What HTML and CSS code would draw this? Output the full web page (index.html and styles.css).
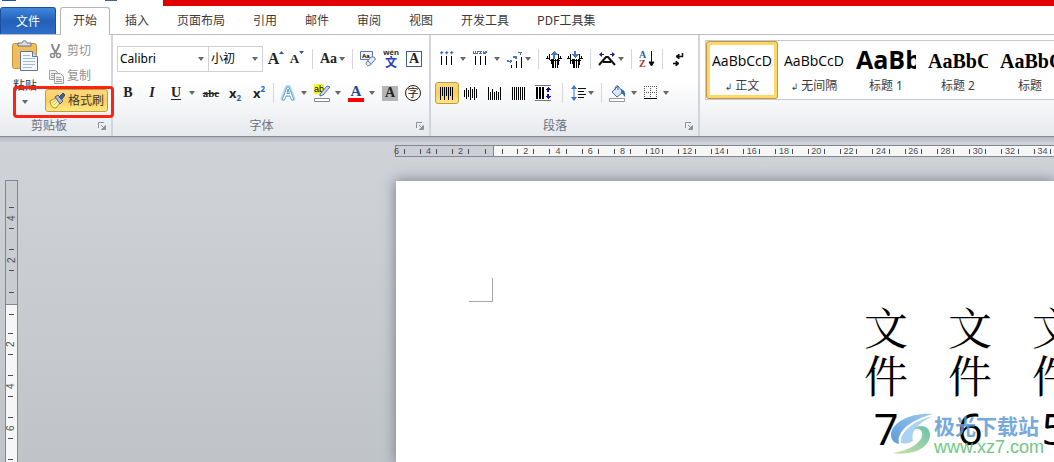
FILE: index.html
```
<!DOCTYPE html>
<html lang="zh-CN">
<head>
<meta charset="utf-8">
<title>文档编辑</title>
<link rel="stylesheet" href="styles.css">
</head>
<body>
<header class="titlebar">
  <span class="quick"></span><span class="quick quick-small"></span><span class="title-fill"></span>
</header>

<nav class="tabs">
  <button class="tab tab-file">文件</button>
  <button class="tab tab-active">开始</button>
  <button class="tab">插入</button>
  <button class="tab">页面布局</button>
  <button class="tab">引用</button>
  <button class="tab">邮件</button>
  <button class="tab">审阅</button>
  <button class="tab">视图</button>
  <button class="tab">开发工具</button>
  <button class="tab">PDF工具集</button>
</nav>

<section class="ribbon">
  <div class="group group-clipboard">
    <div class="clipboard">
      <button class="paste">
        <svg width="28" height="32" viewBox="0 0 28 32">
          <rect x="1.500" y="3.500" width="24" height="25" rx="2" fill="#f2bd5e" stroke="#c8923a"/>
          <path d="M7 6V3h4c0-3 5-3 5 0h4v3z" fill="#d9dde2" stroke="#6d7278"/>
          <path d="M9.500 11.500h12l5 5v14h-17z" fill="#f4f8fd" stroke="#5f7591"/>
          <path d="M21.500 11.500v5h5" fill="#cfdcec" stroke="#5f7591"/>
          <path d="M12 15.500h7M12 18.500h12M12 21.500h12M12 24.500h12M12 27.500h9" stroke="#a4b9d3"/>
        </svg>
        <span>粘贴</span>
        <i class="arrow"></i>
      </button>
      <div class="clip-actions">
        <button class="action muted">
          <svg width="16" height="16" viewBox="0 0 16 16" fill="none" stroke="#8b8b8b"><path d="M4 1c0 3 1 5 5 10M11 1c0 3-1 5-5 10" stroke-width="2"/><circle cx="4.500" cy="12.500" r="2" stroke-width="1.500"/><circle cx="10.500" cy="12.500" r="2" stroke-width="1.500"/></svg>
          剪切</button>
        <button class="action muted">
          <svg width="16" height="16" viewBox="0 0 16 16" fill="#f1f1f1" stroke="#a0a0a0"><path d="M1.500 2.500h6l2 2v7h-8z"/><path d="M3 5.500h4M3 7.500h4M3 9.500h3"/><path d="M6.500 5.500h6l3 3v7h-9z"/><path d="M8 9.500h5M8 11.500h6M8 13.500h6"/></svg>
          复制</button>
        <button class="action painter">
          <svg width="16" height="16" viewBox="0 0 16 16"><path d="M1 8l6-3 4 5-4 5c-3 0-5-1-6-7z" fill="#fff3a2" stroke="#a48a3d"/><path d="M3 10l4-3M5 12l3-3" stroke="#d5b648"/><path d="M6 4l3-2 5 6-3 3z" fill="#a9b9d0" stroke="#4a5f80"/><path d="M10 4l4-4 2 2-3 4z" fill="#44618e" stroke="#344a70"/></svg>
          格式刷</button>
      </div>
    </div>
    <footer class="group-name"><span>剪贴板</span><svg class="launcher" viewBox="0 0 8 8"><path d="M.5 6V.5H6" fill="none" stroke="#8d929a"/><path d="M3 3l3 3M7.500 3.500v4h-4z" fill="#8d929a" stroke="#8d929a"/></svg></footer>
    <div class="highlight"></div>
  </div>

  <div class="group group-font">
    <div class="row">
      <label class="combo combo-font"><input aria-label="字体" value="Calibri"><i class="arrow"></i></label>
      <label class="combo combo-size"><input aria-label="字号" value="小初"><i class="arrow"></i></label>
      <div class="set set-tight">
        <button class="tool glyph serif grow">A<svg class="mark" viewBox="0 0 5 3"><path d="M0 3l2.500-3L5 3z" fill="#2d58a8"/></svg></button>
        <button class="tool glyph serif shrink">A<svg class="mark" viewBox="0 0 5 3"><path d="M0 0h5L2.500 3z" fill="#2d58a8"/></svg></button>
      </div>
      <i class="sep"></i>
      <button class="tool split near glyph serif case">Aa<i class="arrow"></i></button>
      <i class="sep"></i>
      <div class="set">
        <button class="tool" aria-label="清除格式"><svg width="16" height="16" viewBox="0 0 16 16"><path d="M.5.5h12v8H.5z" fill="#eef3fa" stroke="#5878a8"/><text x="2" y="7" class="tiny-a">Aa</text><path d="M6 12l5-6q4-1 4.500 2l-5 6q-4 2-4.500-2z" fill="#e3eaf6" stroke="#637ca4"/><path d="M7 10q2 0 4 3" stroke="#637ca4" fill="none"/></svg></button>
        <button class="tool pinyin"><small>wén</small><b>文</b></button>
        <button class="tool glyph serif framed">A</button>
      </div>
    </div>
    <div class="row row-format">
      <div class="set set-wide">
        <button class="tool glyph serif">B</button>
        <button class="tool glyph serif italic">I</button>
        <button class="tool split glyph serif"><u>U</u><i class="arrow"></i></button>
        <button class="tool glyph serif strike">abc</button>
        <button class="tool glyph script">x<sub>2</sub></button>
        <button class="tool glyph script">x<sup>2</sup></button>
      </div>
      <i class="sep"></i>
      <div class="set">
        <button class="tool split" aria-label="文本效果"><svg width="16" height="18" viewBox="0 0 16 18" fill="none"><path d="M2 16L7 3h2l5 13M4.500 11h7" stroke="#b5def5" stroke-width="4" stroke-linejoin="round"/><path d="M2 16L7 3h2l5 13h-2.500l-1.500-4H6l-1.500 4zM7 9.500h2.500L8 5z" fill="#fff" stroke="#5b9fce"/></svg><i class="arrow"></i></button>
        <button class="tool split" aria-label="突出显示"><svg width="16" height="18" viewBox="0 0 16 18"><path d="M0 0h10v10H0z" fill="#f8f22c"/><text x="0" y="8" class="tiny-ab">ab</text><path d="M6 10l7-8 3 1-7 8-3 1z" fill="#c7d8ec" stroke="#56749f"/><path d="M.5 14.500h15v3H.5z" fill="#fff" stroke="#888"/></svg><i class="arrow"></i></button>
        <button class="tool split" aria-label="字体颜色"><svg width="16" height="18" viewBox="0 0 16 18"><text x="8" y="12" text-anchor="middle" class="color-a">A</text><path d="M0 14h16v4H0z" fill="#f00"/></svg><i class="arrow"></i></button>
        <button class="tool glyph serif shaded">A</button>
        <button class="tool circled">字</button>
      </div>
    </div>
    <footer class="group-name"><span>字体</span><svg class="launcher" viewBox="0 0 8 8"><path d="M.5 6V.5H6" fill="none" stroke="#8d929a"/><path d="M3 3l3 3M7.500 3.500v4h-4z" fill="#8d929a" stroke="#8d929a"/></svg></footer>
  </div>

  <div class="group group-paragraph">
    <div class="row row-list">
      <div class="set">
        <button class="tool split" aria-label="项目符号"><svg class="crisp" width="16" height="16" viewBox="0 0 16 16"><path d="M1 1h1V0h1v1h1v1H3v1H2V2H1zM6 1h1V0h1v1h1v1H8v1H7V2H6zM11 1h1V0h1v1h1v1h-1v1h-1V2h-1z" fill="#3763b0" stroke="#7d9bd0" stroke-width=".5"/><path d="M2 5h1v9H2zM7 5h1v9H7zM12 5h1v9h-1z"/></svg><i class="arrow"></i></button>
        <button class="tool split" aria-label="编号"><svg class="crisp" width="16" height="16" viewBox="0 0 16 16"><path d="M0 0h1v2h1V0h1v2h1V0h1v3H0zM5 0h4v1H8v1h1v1H6V2h1V1H5zM10 0h1v1h1V0h2v2h-1v1h-3z" fill="#4b74ba"/><path d="M2 5h1v9H2zM7 5h1v9H7zM12 5h1v9h-1z"/></svg><i class="arrow"></i></button>
        <button class="tool split near" aria-label="多级列表"><svg class="crisp" width="16" height="17" viewBox="0 0 16 17"><path d="M0 9h2v1h1V9h2v2H4v1H3v-1H0zM6 5h4v3H8V7H6zM11 1h4v1h-1v2h-1V2h-2z" fill="#4b74ba"/><path d="M4 14h1v3H4zM9 10h1v7H9zM14 6h1v11h-1z"/></svg><i class="arrow"></i></button>
      </div>
      <i class="sep"></i>
      <div class="set set-tight">
        <button class="tool" aria-label="减少缩进"><svg class="crisp" width="16" height="17" viewBox="0 0 16 17"><path d="M1 5h1v3H1zM3 3h1v6H3zM5 8h1v5H5zM6 8h2v9H6zM9 8h1v9H9zM11 8h1v9h-1zM12 3h1v11h-1zM14 5h1v3h-1zM0 7h4v1H0zM12 7h4v1h-4zM4 9h10v1H4z"/><path d="M8 0l4 4H9v4H7V4H4z" fill="#4475c9"/></svg></button>
        <button class="tool" aria-label="增加缩进"><svg class="crisp" width="16" height="17" viewBox="0 0 16 17"><path d="M1 5h1v3H1zM3 3h1v10H3zM5 8h1v5H5zM6 8h2v9H6zM9 8h1v9H9zM11 8h1v9h-1zM12 3h1v11h-1zM14 5h1v3h-1zM0 7h4v1H0zM12 7h4v1h-4zM4 9h10v1H4z"/><path d="M8 7l4-4H9V0H7v3H4z" fill="#4475c9"/></svg></button>
      </div>
      <i class="sep"></i>
      <button class="tool split near" aria-label="中文版式"><svg width="18" height="14" viewBox="0 0 18 14"><path d="M1 13L8 5h2l7 8M5 10h8" fill="none" stroke="#111" stroke-width="2"/><path d="M4 0v2h2v1H4v2L1 2.500zM14 0v2h-2v1h2v2l3-2.500z" fill="#1b1c98"/></svg><i class="arrow"></i></button>
      <i class="sep"></i>
      <button class="tool" aria-label="排序"><svg width="16" height="18" viewBox="0 0 16 18"><text x="0" y="8" class="sort-a">A</text><text x="0" y="17" class="sort-z">Z</text><path d="M12.500 1v14M10 12l2.500 4 2.500-4z" stroke="#111"/></svg></button>
      <i class="sep"></i>
      <button class="tool" aria-label="显示编辑标记"><svg width="14" height="16" viewBox="0 0 14 16" fill="none" stroke="#111"><path d="M11.500 2v3.500H5M2 12.500h5" stroke-width="1.500"/><path d="M8 3L5 5.500 8 8zM5 10l3 2.500L5 15z" fill="#111"/></svg></button>
    </div>
    <div class="row row-align">
      <div class="set set-none">
        <button class="tool align selected" aria-label="顶端对齐"><svg class="crisp" width="15" height="15" viewBox="0 0 15 15"><path d="M0 1h1v13H0zM2 1h1v9H2zM4 1h1v13H4zM6 1h1v9H6zM8 1h1v13H8zM10 1h1v9h-1zM12 1h1v13h-1z"/></svg></button>
        <button class="tool align" aria-label="居中"><svg class="crisp" width="15" height="15" viewBox="0 0 15 15"><path d="M0 4h1v7H0zM2 2h1v11H2zM4 4h1v7H4zM6 1h1v13H6zM8 3h1v9H8zM10 1h1v13h-1zM12 3h1v9h-1z"/></svg></button>
        <button class="tool align" aria-label="底端对齐"><svg class="crisp" width="15" height="15" viewBox="0 0 15 15"><path d="M0 1h1v13H0zM2 6h1v8H2zM4 3h1v11H4zM6 6h1v8H6zM8 5h1v9H8zM10 6h1v8h-1zM12 1h1v13h-1z"/></svg></button>
        <button class="tool align" aria-label="两端对齐"><svg class="crisp" width="15" height="15" viewBox="0 0 15 15"><path d="M0 1h1v13H0zM2 1h1v13H2zM4 1h1v13H4zM6 1h1v13H6zM8 1h1v13H8zM10 1h1v13h-1zM12 1h1v13h-1z"/></svg></button>
        <button class="tool align" aria-label="分散对齐"><svg class="crisp" width="16" height="16" viewBox="0 0 16 16"><path d="M0 0h16v1H0zM0 15h16v1H0z" fill="#777"/><path d="M1 2h2v12H1zM4 2h2v12H4zM7 2h2v12H7z"/><path d="M13 2l3 3h-2v2h-2V5h-2zM13 14l3-3h-2V9h-2v2h-2z" fill="#15159a"/></svg></button>
      </div>
      <i class="sep"></i>
      <button class="tool split near" aria-label="行距"><svg width="16" height="18" viewBox="0 0 16 18"><path d="M4 1l3 4H4.500v8H7l-3 4-3-4h2.500V5H1z" fill="#3c75cc"/><path d="M8 4.500h8M8 7.500h6M8 10.500h8M8 13.500h6" stroke="#111"/></svg><i class="arrow"></i></button>
      <i class="sep"></i>
      <div class="set">
        <button class="tool split" aria-label="底纹"><svg width="17" height="17" viewBox="0 0 17 17"><path d="M3 7l6-6 5 6-6 5z" fill="#dce8f5" stroke="#48698f"/><path d="M6 5q0-5 3-4v4" fill="none" stroke="#48698f"/><path d="M12 4q5 1 4 8-2-3-4-4z" fill="#376db0"/><path d="M.5 13.500h15v3H.5z" fill="#fff" stroke="#999"/></svg><i class="arrow"></i></button>
        <button class="tool split" aria-label="框线"><svg class="crisp" width="14" height="14" viewBox="0 0 14 14"><path d="M0 .5h13M0 6.500h13M.5 0v12M6.500 0v12M12.500 0v12" stroke="#555" stroke-dasharray="1 1"/><path d="M0 12h13v1H0z"/></svg><i class="arrow"></i></button>
      </div>
    </div>
    <footer class="group-name"><span>段落</span><svg class="launcher" viewBox="0 0 8 8"><path d="M.5 6V.5H6" fill="none" stroke="#8d929a"/><path d="M3 3l3 3M7.500 3.500v4h-4z" fill="#8d929a" stroke="#8d929a"/></svg></footer>
  </div>

  <div class="group group-styles">
    <div class="gallery">
      <button class="style style-selected"><span class="sample">AaBbCcD</span><span class="style-name"><small>↲</small> 正文</span></button>
      <button class="style"><span class="sample">AaBbCcD</span><span class="style-name"><small>↲</small> 无间隔</span></button>
      <button class="style"><span class="sample sample-h1">AaBb</span><span class="style-name">标题 1</span></button>
      <button class="style"><span class="sample sample-h2">AaBbC</span><span class="style-name">标题 2</span></button>
      <button class="style"><span class="sample sample-h2">AaBbC</span><span class="style-name">标题</span></button>
    </div>
  </div>
</section>

<main class="workspace">
  <div class="ruler">
    <div class="ruler-margin"><span class="mark-cell first">6</span><span class="mark-cell">4</span><span class="mark-cell">2</span><span class="half-cell"></span></div>
    <div class="ruler-body">
      <span class="half-cell"></span>
      <div class="scale"><span class="mark-cell">2</span><span class="mark-cell">4</span><span class="mark-cell">6</span><span class="mark-cell">8</span><span class="mark-cell">10</span><span class="mark-cell">12</span><span class="mark-cell">14</span><span class="mark-cell">16</span><span class="mark-cell">18</span><span class="mark-cell">20</span><span class="mark-cell">22</span><span class="mark-cell">24</span><span class="mark-cell">26</span><span class="mark-cell">28</span><span class="mark-cell">30</span><span class="mark-cell">32</span><span class="mark-cell">34</span><span class="mark-cell">36</span><span class="mark-cell">38</span><span class="mark-cell">40</span></div>
    </div>
  </div>
  <div class="canvas">
    <div class="vruler">
      <div class="vruler-margin"><span class="v-cell">4</span><span class="v-cell">2</span><span class="v-half v-half-top"></span></div>
      <div class="vruler-body"><span class="v-half"></span><span class="v-cell">2</span><span class="v-cell">4</span><span class="v-cell">6</span><span class="v-cell">8</span></div>
    </div>
    <article class="page">
      <div class="crop-mark"></div>
      <div class="columns">
        <p class="column">文<br>件<br><span class="num">7</span></p>
        <p class="column">文<br>件<br><span class="num">6</span></p>
        <p class="column">文<br>件<br><span class="num">5</span></p>
      </div>
    </article>
  </div>
</main>

<aside class="watermark">
  <svg width="44" height="42" viewBox="0 0 44 42">
    <defs>
      <linearGradient id="swirl-blue" x1="1" y1="0" x2="0" y2="1"><stop offset="0" stop-color="#8ec3ee"/><stop offset="1" stop-color="#3f8ad2"/></linearGradient>
      <linearGradient id="swirl-green" x1="1" y1="0" x2="0" y2="1"><stop offset="0" stop-color="#4fb7a0"/><stop offset="1" stop-color="#c3df8e"/></linearGradient>
    </defs>
    <path d="M43 1C22-1 2 9 1 21c0 6 3 9 8 10C6 19 20 7 43 1z" fill="url(#swirl-blue)"/>
    <path d="M43 3C24 8 10 18 11 30c5 1 9 0 12-2-3-9 5-18 20-25z" fill="#9ccbf0"/>
    <path d="M3 40c19 3 37-5 37-18 0-6-4-9-9-9-3 0-5 1-7 3 6-1 9 2 8 7-2 8-13 14-29 17z" fill="url(#swirl-green)"/>
  </svg>
  <div class="watermark-text"><strong>极光下载站</strong><span>www.xz7.com</span></div>
</aside>
</body>
</html>
```

FILE: styles.css
```
* { box-sizing: border-box; }

body {
  margin: 0;
  height: 100vh;
  display: flex;
  flex-direction: column;
  overflow: hidden;
  position: relative;
  background: #fff;
  color: #3b3b3b;
  font: 12px/16px "Noto Sans", "Noto Sans CJK SC", sans-serif;
}

button {
  margin: 0;
  padding: 0;
  border: 0;
  background: none;
  color: inherit;
  font: inherit;
  white-space: nowrap;
}

svg { display: block; flex: none; }
.crisp { shape-rendering: crispEdges; }

/* Title strip */
.titlebar { display: flex; flex: none; height: 6px; }
.quick { width: 14px; height: 1px; margin-left: 2px; background: #2b4d9c; }
.quick-small { width: 12px; margin-left: 89px; background: #4a5f8f; }
.title-fill { flex: 1; margin-left: 46px; background: #e00000; }

/* Tabs */
.tabs {
  display: flex;
  flex: none;
  height: 29px;
  padding-top: 1px;
  border-bottom: 1px solid #b9bcc4;
}
.tab { padding: 0 14px 1px; font-family: "Noto Sans CJK SC", sans-serif; }
.tab-file {
  width: 56px;
  margin-right: 4px;
  border: 1px solid #1d4f9f;
  border-bottom: 0;
  border-radius: 3px 3px 0 0;
  background: linear-gradient(#4186dd, #2360b8 50%, #2e6fc9);
  color: #fff;
}
.tab-active {
  width: 50px;
  padding: 0 12px 3px;
  margin-right: 1px;
  height: 28px;
  border: 1px solid #b0b4bc;
  border-bottom: 0;
  border-radius: 3px 3px 0 0;
  background: #fff;
}

/* Ribbon */
.ribbon {
  display: flex;
  flex: none;
  height: 102px;
  overflow: hidden;
  border-bottom: 1px solid #868a90;
  background: linear-gradient(#fff 45%, #f3f4f6 75%, #e6e9ed);
}
.group {
  display: flex;
  flex-direction: column;
  flex: none;
  position: relative;
  padding-top: 7px;
  border-right: 2px solid #d1d4da;
}
.group-clipboard { width: 113px; padding-top: 4px; }
.group-font { width: 318px; }
.group-paragraph { width: 269px; }
.group-styles { flex: 1; min-width: 0; border: 0; padding: 5px 0 0 5px; }

.group-name {
  display: flex;
  align-items: center;
  gap: 6px;
  margin-top: auto;
  height: 20px;
  padding-right: 5px;
  color: #6a7180;
  text-align: center;
}
.group-name span { flex: 1; }
.group-clipboard .group-name { gap: 0; }
.launcher { width: 8px; height: 8px; }

.arrow {
  flex: none;
  width: 6px;
  height: 4px;
  background: #666;
  clip-path: polygon(0 0, 100% 0, 50% 100%);
}

.clipboard { display: flex; gap: 6px; padding-left: 11px; }
.paste {
  display: flex;
  flex-direction: column;
  align-items: center;
  align-self: flex-start;
  width: 28px;
  gap: 6px;
  padding-top: 1px;
  line-height: 16px;
}
.paste span { color: #333; }
.clip-actions { display: flex; flex-direction: column; align-items: flex-start; gap: 2px; }
.action { display: flex; align-items: center; height: 23px; gap: 3px; padding: 0 3px; }
.muted { color: #929292; }
.painter {
  border: 1px solid #c29b3c;
  border-radius: 3px;
  background: linear-gradient(#fbd981, #fccf5b 50%, #fee880);
}
.highlight {
  position: absolute;
  left: 13px;
  top: 51px;
  width: 101px;
  height: 32px;
  border: 3px solid #fb2414;
  border-radius: 4px;
  z-index: 2;
}

.row { display: flex; align-items: center; height: 34px; flex: none; }
.group-font .row { padding-left: 4px; }
.group-font .row-format { padding-left: 7px; }
.row-list { padding-left: 8px; }
.row-align { padding-left: 4px; }

.set { display: flex; align-items: center; gap: 7px; }
.set-tight { gap: 5px; }
.set-wide { gap: 8px; }
.set-none { gap: 0; }
.combo + .set { margin-left: 5px; }

.sep { flex: none; width: 1px; height: 20px; margin: 0 7px; background: #d3d6dc; }
.row-format .sep { margin: 0 6px; }

.combo {
  display: flex;
  align-items: center;
  height: 26px;
  padding: 0 4px 0 2px;
  border: 1px solid #cfd1d6;
  background: #fff;
}
.combo-font { width: 92px; }
.combo-size { width: 54px; border-left: 0; }
.combo input {
  flex: 1;
  min-width: 0;
  padding: 0;
  border: 0;
  outline: 0;
  background: none;
  color: #000;
  font: inherit;
}

.tool { display: flex; align-items: center; justify-content: center; flex: none; width: 16px; height: 22px; color: #222; }
.split { width: auto; gap: 5px; }
.near { gap: 2px; }
.glyph { font-size: 14px; font-weight: bold; }
.serif { font-family: "Liberation Serif", serif; }
.grow { font-size: 16px; }
.shrink { font-size: 13px; }
.mark { width: 5px; height: 3px; align-self: flex-start; margin-top: 3px; }
.italic { font-style: italic; }
.split u { width: 16px; text-align: center; text-decoration-thickness: 1px; text-underline-offset: 2px; }
.strike { font-size: 11px; font-weight: bold; text-decoration: line-through; }
.script { font-size: 13px; }
.script sub, .script sup { font-size: 8px; line-height: 8px; color: #2f64b5; }
.script sub { align-self: flex-end; margin-bottom: 2px; }
.script sup { align-self: flex-start; margin-top: 3px; }
.tool.framed { height: 16px; border: 1px solid #3f5f8a; }
.shaded { height: 15px; background: #b5b5b5; }
.circled { height: 16px; border: 1px solid #222; border-radius: 50%; font-size: 11px; line-height: 14px; }
.pinyin { flex-direction: column; line-height: 10px; }
.pinyin small { font: bold 8px/8px "Liberation Sans", sans-serif; }
.pinyin b { font-size: 12px; line-height: 12px; font-weight: bold; color: #2740c0; }
.tiny-a { font: bold 6px "Liberation Sans", sans-serif; }
.tiny-ab { font: 9px "Liberation Sans", sans-serif; }
.color-a { font: bold 15px "Liberation Serif", serif; fill: #24498c; }
.sort-a { font: bold 10px "Liberation Serif", serif; fill: #2e5da6; }
.sort-z { font: bold 10px "Liberation Serif", serif; fill: #a03a32; }
.align { width: 24px; }
.selected { border: 1px solid #c29b3c; border-radius: 3px; background: linear-gradient(#fbd981, #fccf5b 50%, #fee880); }

/* Style gallery */
.gallery {
  display: flex;
  height: 60px;
  overflow: hidden;
  border: 1px solid #c6c9ce;
  border-right: 0;
  background: #fff;
}
.style {
  display: flex;
  flex-direction: column;
  align-items: center;
  flex: none;
  width: 72px;
  height: 58px;
  padding: 4px 6px;
}
.style-selected {
  padding: 0 2px;
  border: 4px solid #fdd868;
  border-radius: 3px;
  outline: 1px solid #c0964a;
  outline-offset: -1px;
}
.sample {
  width: 60px;
  height: 32px;
  overflow: hidden;
  color: #000;
  font-family: "Open Sans", sans-serif;
  font-size: 14px;
  line-height: 32px;
  text-align: left;
}
.sample-h1 { font-size: 25px; font-weight: bold; line-height: 28px; }
.sample-h2 { font: bold 20px/32px "Liberation Serif", serif; }
.style-name { line-height: 18px; color: #3b3b3b; }
.style-name small { font: 9px/9px "DejaVu Sans", sans-serif; }

/* Rulers */
.workspace {
  display: flex;
  flex-direction: column;
  flex: 1;
  min-height: 0;
  background: linear-gradient(#b5b9bf, #cfd2d7 6px, #cdd0d5 60px, #c0c4c9);
}
.ruler {
  display: flex;
  flex: none;
  height: 44px;
  padding: 8px 0 24px 395px;
  overflow: hidden;
  color: #4b4e54;
  font: 9px/10px "Liberation Sans", sans-serif;
}
.ruler-margin {
  display: flex;
  justify-content: flex-end;
  align-items: center;
  flex: none;
  width: 99px;
  border: 1px solid #82868e;
  background: #cccfd4;
}
.ruler-body {
  display: flex;
  align-items: center;
  flex: 1;
  min-width: 0;
  border: solid #82868e;
  border-width: 1px 0;
  background: #f6f6f7;
}
.scale { display: flex; flex: none; width: 646px; }
.mark-cell { display: flex; align-items: center; justify-content: center; flex: 1; min-width: 32px; }
.ruler-margin .mark-cell { flex: none; }
.mark-cell::before, .mark-cell::after { content: ""; width: 1px; height: 5px; background: #4b4e54; }
.mark-cell::before { margin-right: auto; margin-left: 7px; }
.mark-cell::after { margin-left: auto; margin-right: 8px; }
.first::before { visibility: hidden; }
.half-cell { display: flex; align-items: center; justify-content: center; flex: none; width: 16px; }
.half-cell::before { content: ""; width: 1px; height: 5px; background: #4b4e54; }

.canvas { display: flex; flex: 1; min-height: 0; }
.vruler {
  display: flex;
  flex-direction: column;
  flex: none;
  width: 13px;
  margin: -1px 378px 0 5px;
  color: #4b4e54;
  font: 10px/10px "Liberation Sans", sans-serif;
}
.vruler-margin {
  display: flex;
  flex-direction: column;
  justify-content: flex-end;
  height: 125px;
  flex: none;
  border: 1px solid #82868e;
  background: #c9ccd1;
}
.vruler-body { flex: 1; overflow: hidden; border: solid #82868e; border-width: 0 1px; background: #f6f6f7; }
.v-cell, .v-half { display: flex; align-items: center; justify-content: center; flex: none; }
.v-cell { height: 42px; writing-mode: vertical-rl; transform: rotate(180deg); }
.v-cell::before, .v-cell::after { content: ""; width: 5px; height: 1px; margin: 7px 0; background: #4b4e54; }
.v-half { height: 18px; }
.v-half-top { height: 23px; }
.v-half::before { content: ""; width: 5px; height: 1px; background: #4b4e54; }

/* Document */
.page {
  flex: 1;
  min-width: 0;
  overflow: hidden;
  padding-top: 97px;
  background: #fff;
  box-shadow: 0 0 12px 1px #7e838c;
}
.crop-mark {
  width: 24px;
  height: 24px;
  margin-left: 73px;
  border: solid #a7a7a7;
  border-width: 0 1px 1px 0;
}
.columns { display: flex; gap: 40px; padding-left: 468px; }
.column {
  flex: none;
  width: 44px;
  margin: 0;
  color: #000;
  text-align: center;
  font: 44px/48px "Noto Serif CJK SC", "Noto Sans CJK SC", serif;
}
.num { font-family: "Open Sans", sans-serif; line-height: 60px; }

/* Site watermark floating over the document */
.watermark {
  position: absolute;
  right: 10px;
  bottom: 6px;
  display: flex;
  align-items: center;
  opacity: 0.85;
}
.watermark-text { display: flex; flex-direction: column; color: #5f9bd8; }
.watermark strong { font: bold 21px/26px "Noto Sans CJK SC", sans-serif; }
.watermark span { color: #55be70; font: 18px/18px "Liberation Sans", sans-serif; }
```
